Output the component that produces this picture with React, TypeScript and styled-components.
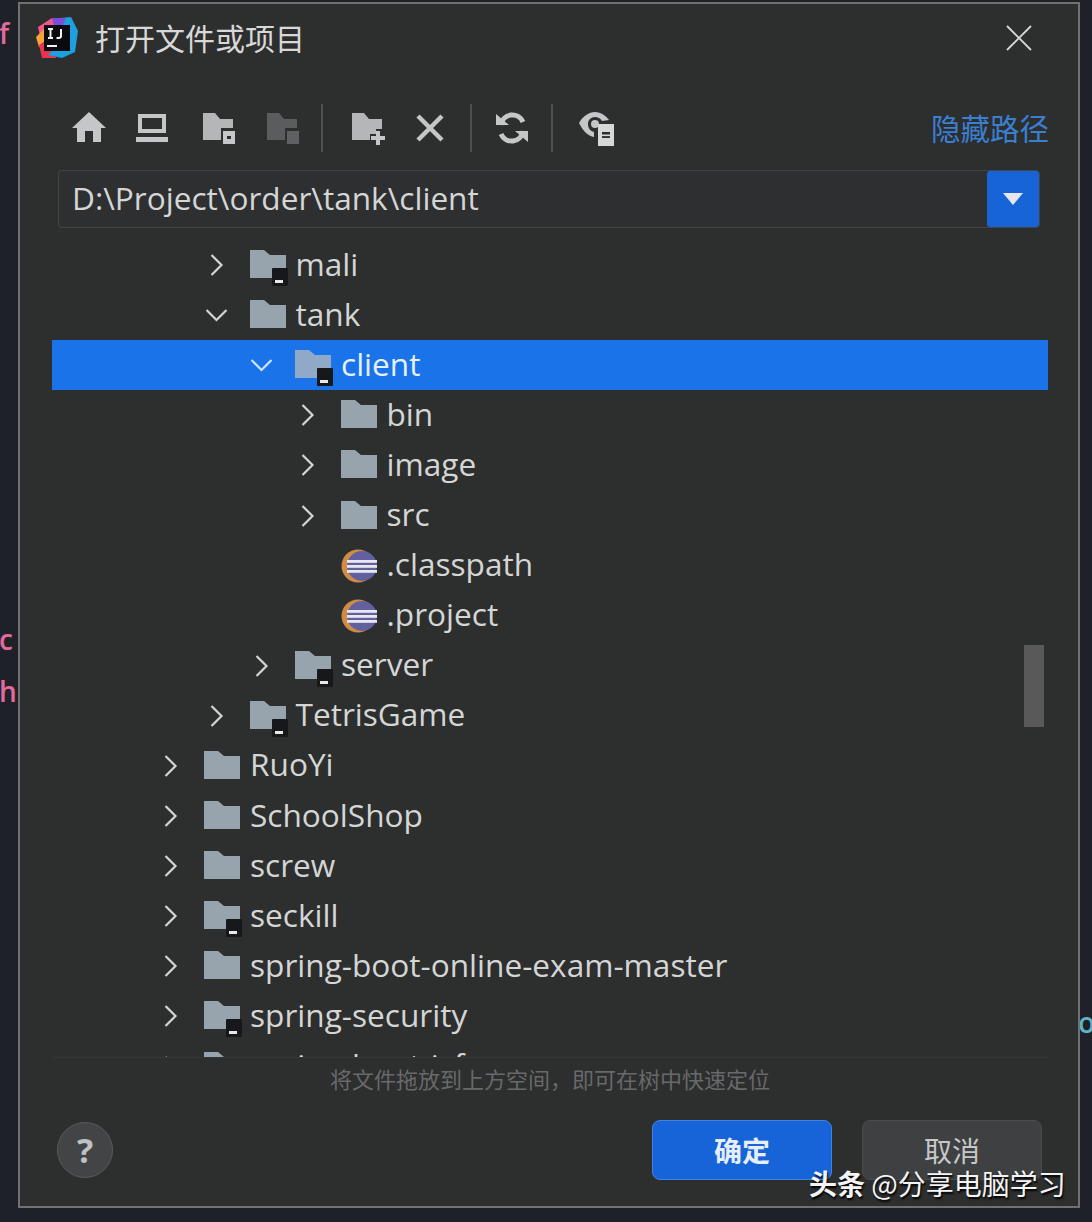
import React from 'react';
import styled, { createGlobalStyle } from 'styled-components';

const SANS = '"Open Sans", "Noto Sans", "Noto Sans CJK SC", sans-serif';
const CJK = '"Noto Sans CJK SC", sans-serif';

type NodeKind = 'folder' | 'module' | 'eclipse';

type TreeNode = {
  name: string;
  level: number;
  kind: NodeKind;
  arrow?: 'right' | 'down';
  selected?: boolean;
};

const treeNodes: TreeNode[] = [
  { name: 'mali', level: 1, kind: 'module', arrow: 'right' },
  { name: 'tank', level: 1, kind: 'folder', arrow: 'down' },
  { name: 'client', level: 2, kind: 'module', arrow: 'down', selected: true },
  { name: 'bin', level: 3, kind: 'folder', arrow: 'right' },
  { name: 'image', level: 3, kind: 'folder', arrow: 'right' },
  { name: 'src', level: 3, kind: 'folder', arrow: 'right' },
  { name: '.classpath', level: 3, kind: 'eclipse' },
  { name: '.project', level: 3, kind: 'eclipse' },
  { name: 'server', level: 2, kind: 'module', arrow: 'right' },
  { name: 'TetrisGame', level: 1, kind: 'module', arrow: 'right' },
  { name: 'RuoYi', level: 0, kind: 'folder', arrow: 'right' },
  { name: 'SchoolShop', level: 0, kind: 'folder', arrow: 'right' },
  { name: 'screw', level: 0, kind: 'folder', arrow: 'right' },
  { name: 'seckill', level: 0, kind: 'module', arrow: 'right' },
  { name: 'spring-boot-online-exam-master', level: 0, kind: 'folder', arrow: 'right' },
  { name: 'spring-security', level: 0, kind: 'module', arrow: 'right' },
  { name: 'spring-boot-jsf', level: 0, kind: 'module', arrow: 'right' },
];

const FOLDER_PATH = 'M0 0H14L20 5H36V28H0Z';

function FolderIcon({ module, selected }: { module: boolean; selected?: boolean }) {
  return (
    <svg width="40" height="42" viewBox="0 0 40 42">
      <path d={FOLDER_PATH} transform="translate(0 6)" fill={selected ? '#8fa9c6' : '#97a4ae'} />
      {module && (
        <>
          <rect x="22" y="24" width="16" height="18" rx="1" fill="#16181c" />
          <rect x="25" y="36" width="8" height="3" fill="#e8e8e8" />
        </>
      )}
    </svg>
  );
}

function EclipseIcon() {
  return (
    <svg width="38" height="36" viewBox="0 0 38 36">
      <circle cx="17" cy="18" r="16.5" fill="#d08c45" />
      <circle cx="21" cy="18" r="15" fill="#62609f" />
      <rect x="6" y="12" width="30" height="2.8" fill="#e8e8f0" />
      <rect x="6" y="17" width="30" height="2.8" fill="#e8e8f0" />
      <rect x="6" y="22" width="30" height="2.8" fill="#e8e8f0" />
    </svg>
  );
}

function Chevron({ dir, selected }: { dir: 'right' | 'down'; selected?: boolean }) {
  const color = selected ? '#cfe4ff' : '#d2d4d6';
  return (
    <svg width="24" height="24" viewBox="0 0 24 24" fill="none" stroke={color} strokeWidth="2.2">
      {dir === 'right' ? <path d="M5.5 2L15.5 12L5.5 22" /> : <path d="M0.5 7L10.5 17L20.5 7" />}
    </svg>
  );
}

function ToolIcon({ children }: { children: React.ReactNode }) {
  return (
    <svg width="36" height="36" viewBox="0 0 36 36">
      {children}
    </svg>
  );
}

function Logo() {
  return (
    <svg width="42" height="42" viewBox="0 0 42 42">
      <path d="M2 10L16 1L22 12L6 28Z" fill="#f0568f" />
      <path d="M0 20L8 12L10 30L3 30Z" fill="#f7a33a" />
      <path d="M3 28L12 22L20 41L6 41Z" fill="#e8344e" />
      <path d="M24 1L35 0L42 14L39 35L26 41L12 38L30 20Z" fill="#1e9fe0" />
      <path d="M16 1L30 1L26 10L18 10Z" fill="#7a4ed8" />
      <rect x="8" y="8" width="26" height="26" fill="#0b0b0f" />
      <rect x="11" y="28" width="10" height="2" fill="#f2f2f2" />
      <path d="M12 12H17M14.5 12V21M12 21H17M25 12V19Q25 21 22.5 21H20.5" stroke="#f2f2f2" strokeWidth="2" fill="none" />
    </svg>
  );
}

export default function App() {
  return (
    <Page>
      <GlobalStyle />
      <CodeGlyph $top={14} $left={-1}>f</CodeGlyph>
      <CodeGlyph $top={620} $left={-1}>c</CodeGlyph>
      <CodeGlyph $top={672} $left={-1}>h.</CodeGlyph>
      <CodeGlyph $top={1003} $left={1078} $teal>o</CodeGlyph>
      <Dialog>
        <TitleBar>
          <Logo />
          <Title>打开文件或项目</Title>
          <CloseButton>
            <svg width="26" height="26" viewBox="0 0 26 26" stroke="#d8d8d8" strokeWidth="1.8">
              <path d="M1 1L25 25M25 1L1 25" />
            </svg>
          </CloseButton>
        </TitleBar>
        <Toolbar>
          <ToolGroup>
            <ToolIcon>
              <path d="M17 2L34 18H29V32H21V21H13V32H5V18H0Z" fill="#c4c6c7" />
            </ToolIcon>
            <ToolIcon>
              <path d="M2 4H30V23H2ZM6 8V19H26V8Z" fill="#c4c6c7" fillRule="evenodd" />
              <rect x="0" y="27" width="32" height="5" fill="#c4c6c7" />
            </ToolIcon>
            <ToolIcon>
              <path d="M3 3H15L20 9H33V18H21V30H3Z" fill="#b4b6b7" />
              <path d="M23 21H35V34H23ZM27 26V29H31V26Z" fill="#c4c6c7" fillRule="evenodd" />
            </ToolIcon>
            <ToolIcon>
              <path d="M3 3H15L20 9H33V18H21V30H3Z" fill="#5a5c5d" />
              <rect x="23" y="21" width="12" height="13" fill="#5e6061" />
            </ToolIcon>
          </ToolGroup>
          <ToolDivider $left={17} $right={23} />
          <ToolGroup $gap={26}>
            <ToolIcon>
              <path d="M2 3H14L19 9H32V19H26V24H20V30H2Z" fill="#b4b6b7" />
              <path d="M26 21H30V26H35V30H30V35H26V30H21V26H26Z" fill="#c4c6c7" />
            </ToolIcon>
            <ToolIcon>
              <path d="M6 6L30 30M30 6L6 30" stroke="#c4c6c7" strokeWidth="4.5" />
            </ToolIcon>
          </ToolGroup>
          <ToolDivider $left={18} $right={18} />
          <ToolGroup>
            <ToolIcon>
              <path d="M7 15A11.5 11.5 0 0 1 29 12" fill="none" stroke="#c4c6c7" strokeWidth="5" />
              <path d="M2 4L15 15H2Z" fill="#c4c6c7" />
              <path d="M29 21A11.5 11.5 0 0 1 7 24" fill="none" stroke="#c4c6c7" strokeWidth="5" />
              <path d="M34 32L21 21H34Z" fill="#c4c6c7" />
            </ToolIcon>
          </ToolGroup>
          <ToolDivider $left={17} $right={21} />
          <ToolGroup>
            <ToolIcon>
              <path d="M1 13C5 6 11 2 17 2C23 2 28 6 31 10L24 11C22 8 20 7 17 7C13 7 10 10 10 14C10 18 12 21 16 22V27C10 26 5 21 1 13Z" fill="#c4c6c7" />
              <circle cx="17" cy="14" r="4" fill="#c4c6c7" />
              <path d="M20 14H36V36H20ZM24 22V28H32V22Z" fill="#d6d8d8" fillRule="evenodd" />
              <rect x="24" y="24.5" width="8" height="1.6" fill="#d6d8d8" />
            </ToolIcon>
          </ToolGroup>
          <HideLink>隐藏路径</HideLink>
        </Toolbar>
        <PathRow>
          <PathText>D:\Project\order\tank\client</PathText>
          <PathDrop>
            <svg width="20" height="12" viewBox="0 0 20 12">
              <path d="M0 0H20L10 12Z" fill="#e6e8ee" />
            </svg>
          </PathDrop>
        </PathRow>
        <Tree>
          {treeNodes.map((node) => (
            <Row key={node.name} $selected={node.selected}>
              <Indent $level={node.level} />
              <ArrowSlot>
                {node.arrow && <Chevron dir={node.arrow} selected={node.selected} />}
              </ArrowSlot>
              <IconSlot>
                {node.kind === 'eclipse' ? (
                  <EclipseIcon />
                ) : (
                  <FolderIcon module={node.kind === 'module'} selected={node.selected} />
                )}
              </IconSlot>
              <RowLabel $selected={node.selected}>{node.name}</RowLabel>
            </Row>
          ))}
        </Tree>
        <Hint>将文件拖放到上方空间，即可在树中快速定位</Hint>
        <Footer>
          <HelpButton>?</HelpButton>
          <FooterButtons>
            <PrimaryButton>确定</PrimaryButton>
            <SecondaryButton>取消</SecondaryButton>
          </FooterButtons>
        </Footer>
        <ScrollThumb />
      </Dialog>
      <Watermark>
        <b>头条</b> @分享电脑学习
      </Watermark>
    </Page>
  );
}

const GlobalStyle = createGlobalStyle`
  html, body {
    margin: 0;
    padding: 0;
    background: #1e2128;
  }
`;

const Page = styled.div`
  position: relative;
  width: 1092px;
  height: 1222px;
  padding: 2px 12px 14px 18px;
  box-sizing: border-box;
  overflow: hidden;
  background: #1e2128;
`;

const CodeGlyph = styled.span<{ $top: number; $left: number; $teal?: boolean }>`
  position: absolute;
  top: ${(p) => p.$top}px;
  left: ${(p) => p.$left}px;
  font: 600 28px ${SANS};
  color: ${(p) => (p.$teal ? '#5fb3c4' : '#e26a9c')};
`;

const Dialog = styled.div`
  position: relative;
  display: flex;
  flex-direction: column;
  height: 100%;
  box-sizing: border-box;
  border: 2px solid #6f7173;
  background: #2d2e2e;
  padding: 0 30px 0 32px;
`;

const TitleBar = styled.div`
  display: flex;
  align-items: center;
  height: 68px;
  margin-left: -16px;
  gap: 17px;
`;

const Title = styled.div`
  flex: 1;
  padding-bottom: 3px;
  font: 400 30px ${CJK};
  color: #d8d8d8;
`;

const CloseButton = styled.div`
  display: flex;
  margin-right: 16px;
`;

const Toolbar = styled.div`
  display: flex;
  align-items: center;
  height: 48px;
  margin-top: 32px;
  margin-left: 16px;
`;

const ToolGroup = styled.div<{ $gap?: number }>`
  display: flex;
  gap: ${(p) => p.$gap ?? 28}px;
  padding: 0 4px;
`;

const ToolDivider = styled.div<{ $left: number; $right: number }>`
  width: 2px;
  height: 48px;
  margin: 0 ${(p) => p.$right}px 0 ${(p) => p.$left}px;
  background: #4d4f50;
`;

const HideLink = styled.div`
  margin-left: auto;
  margin-right: -1px;
  padding-bottom: 3px;
  font: 400 29.5px ${CJK};
  color: #3a7fd0;
`;

const PathRow = styled.div`
  display: flex;
  align-items: center;
  justify-content: space-between;
  height: 58px;
  margin-top: 18px;
  margin-left: 6px;
  margin-right: 8px;
  box-sizing: border-box;
  border: 1px solid #434547;
  border-radius: 4px;
  background: #2e2f30;
`;

const PathText = styled.div`
  padding-left: 13px;
  padding-bottom: 4px;
  font: 400 31.6px ${SANS};
  color: #d4d6d6;
`;

const PathDrop = styled.div`
  display: flex;
  align-items: center;
  justify-content: center;
  width: 52px;
  height: 56px;
  border-radius: 3px;
  background: #1764d8;
`;

const Tree = styled.div`
  height: 818px;
  margin-top: 12px;
  box-sizing: border-box;
  border-bottom: 1px solid #353637;
  overflow: hidden;
`;

const Row = styled.div<{ $selected?: boolean }>`
  display: flex;
  align-items: center;
  height: 50.1px;
  padding-left: 108px;
  background: ${(p) => (p.$selected ? '#1a73e8' : 'transparent')};
`;

const Indent = styled.div<{ $level: number }>`
  flex: none;
  width: ${(p) => p.$level * 45.5}px;
`;

const ArrowSlot = styled.div`
  flex: none;
  display: flex;
  width: 44px;
`;

const IconSlot = styled.div`
  flex: none;
  display: flex;
  width: 46px;
`;

const RowLabel = styled.div<{ $selected?: boolean }>`
  padding-bottom: 4px;
  font: 400 31.6px ${SANS};
  color: ${(p) => (p.$selected ? '#e4f1ff' : '#d4d6d6')};
  white-space: nowrap;
`;

const Hint = styled.div`
  margin-top: 5px;
  text-align: center;
  font: 400 22px/30px ${CJK};
  color: #68696b;
`;

const Footer = styled.div`
  display: flex;
  align-items: center;
  justify-content: space-between;
  margin-top: 27px;
  margin-left: 5px;
  margin-right: 6px;
`;

const HelpButton = styled.div`
  display: flex;
  align-items: center;
  justify-content: center;
  width: 56px;
  height: 56px;
  box-sizing: border-box;
  border: 1px solid #5a5b5d;
  border-radius: 50%;
  background: #434446;
  font: 700 34px ${SANS};
  color: #bfc1c2;
`;

const FooterButtons = styled.div`
  display: flex;
  gap: 30px;
`;

const PrimaryButton = styled.div`
  display: flex;
  align-items: center;
  justify-content: center;
  width: 180px;
  height: 60px;
  box-sizing: border-box;
  border: 1px solid #3f83e6;
  border-radius: 8px;
  background: #1764d8;
  font: 700 28px ${CJK};
  color: #e6eefb;
`;

const SecondaryButton = styled(PrimaryButton)`
  border-color: #4a4b4d;
  background: #3f4042;
  font-weight: 400;
  color: #c6c8c8;
`;

const ScrollThumb = styled.div`
  position: absolute;
  top: 641px;
  right: 34px;
  width: 20px;
  height: 82px;
  background: #59595a;
`;

const Watermark = styled.div`
  position: absolute;
  top: 1163px;
  left: 809px;
  font: 400 28px ${CJK};
  color: #f4f4f4;
  text-shadow: 1px 2px 2px #000;
  white-space: nowrap;

  b {
    font-weight: 700;
  }
`;
